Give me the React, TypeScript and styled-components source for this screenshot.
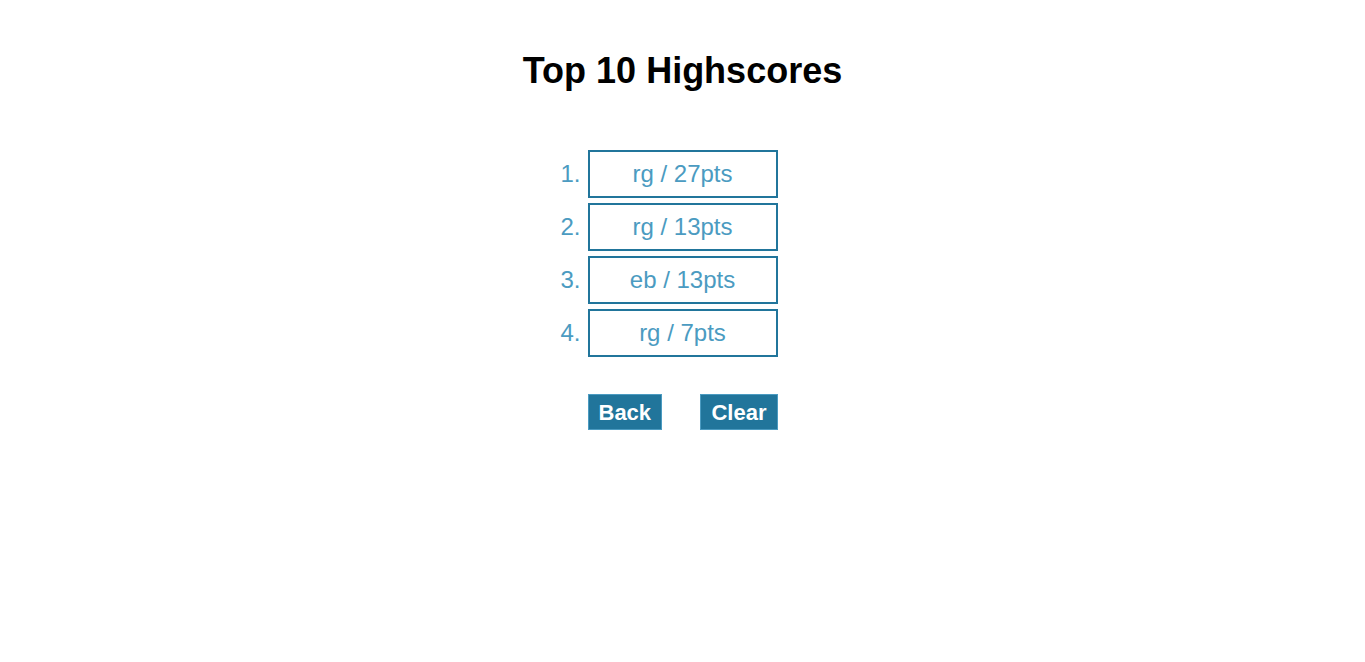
import React from "react";
import styled, { createGlobalStyle } from "styled-components";

const GlobalStyle = createGlobalStyle`
  html, body {
    margin: 0;
    padding: 0;
    background: #ffffff;
  }
  body {
    font-family: "Liberation Sans", Arial, sans-serif;
  }
`;

const Page = styled.main`
  display: flex;
  flex-direction: column;
  align-items: stretch;
  padding-top: 50px;
  min-height: 662px;
  box-sizing: border-box;
`;

const Title = styled.h1`
  margin: 0;
  font-size: 36px;
  line-height: 41px;
  font-weight: 700;
  color: #000000;
  text-align: center;
`;

const List = styled.ol`
  list-style: none;
  margin: 59px 0 0;
  padding: 0;
  display: flex;
  flex-direction: column;
  gap: 5px;
`;

const Row = styled.li`
  display: grid;
  grid-template-columns: 1fr 190px 1fr;
  align-items: center;
`;

const Rank = styled.span`
  justify-self: end;
  padding-right: 7px;
  font-size: 24px;
  color: #4b9bc1;
`;

const Entry = styled.div`
  box-sizing: border-box;
  height: 48px;
  border: 2px solid #21759b;
  display: flex;
  align-items: center;
  justify-content: center;
  font-size: 24px;
  color: #4b9bc1;
`;

const ButtonBar = styled.div`
  width: 190px;
  margin: 37px auto 0;
  display: flex;
  justify-content: space-between;
`;

const Button = styled.button`
  box-sizing: border-box;
  height: 36px;
  padding: 0 10px;
  border: 1px solid #4b9bc1;
  background: #21759b;
  color: #ffffff;
  font-family: "Liberation Sans", Arial, sans-serif;
  font-weight: 700;
  font-size: 22px;
  line-height: 25px;
  cursor: pointer;
`;

const scores = [
  { name: "rg", pts: 27 },
  { name: "rg", pts: 13 },
  { name: "eb", pts: 13 },
  { name: "rg", pts: 7 },
];

export default function App() {
  return (
    <>
      <GlobalStyle />
      <Page>
        <Title>Top 10 Highscores</Title>
        <List>
          {scores.map((s, i) => (
            <Row key={i}>
              <Rank>{i + 1}.</Rank>
              <Entry>
                {s.name} / {s.pts}pts
              </Entry>
            </Row>
          ))}
        </List>
        <ButtonBar>
          <Button>Back</Button>
          <Button>Clear</Button>
        </ButtonBar>
      </Page>
    </>
  );
}
